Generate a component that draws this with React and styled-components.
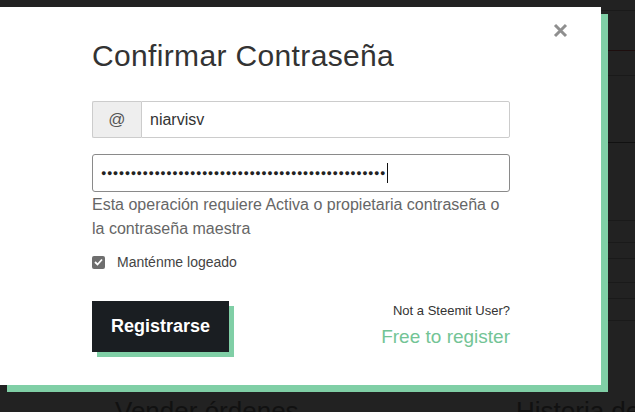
import React from "react";
import styled, { createGlobalStyle } from "styled-components";

const GlobalStyle = createGlobalStyle`
  html, body { margin: 0; padding: 0; }
  body {
    background: #222222;
    font-family: "Liberation Sans", Arial, sans-serif;
  }
`;

const Page = styled.div`
  position: relative;
  width: 635px;
  height: 412px;
  overflow: hidden;
  background: #222222;
  display: flex;
  flex-direction: column;
`;

const Backdrop = styled.div`
  display: flex;
  flex-direction: column;
  flex: 1;
`;

const BgRow = styled.div`
  height: ${(p) => p.h}px;
  border-bottom: 1px solid ${(p) => p.line || "#1a1a1a"};
  box-sizing: border-box;
`;

const BgHeadings = styled.div`
  display: grid;
  grid-template-columns: 401px 1fr;
  padding-left: 115px;
  margin-top: auto;
  height: 16px;
`;

const BgHeading = styled.h3`
  margin: 0;
  font-family: "Liberation Sans", Arial, sans-serif;
  font-weight: 400;
  font-size: 26px;
  line-height: 30px;
  color: #111111;
  white-space: nowrap;
`;

const Modal = styled.div`
  position: absolute;
  top: 7px;
  left: 0;
  width: 601px;
  height: 378px;
  background: #ffffff;
  box-shadow: 7px 7px 0 #80cfa6;
  box-sizing: border-box;
  padding: 31px 91px 0 92px;
`;

const Close = styled.button`
  position: absolute;
  top: 15px;
  right: 33px;
  border: 0;
  background: none;
  padding: 0;
  width: 16px;
  height: 16px;
  display: flex;
  align-items: center;
  justify-content: center;
  cursor: pointer;
`;

const Title = styled.h2`
  margin: 0 0 27px;
  font-size: 30px;
  font-weight: 400;
  letter-spacing: 0.35px;
  line-height: 36px;
  color: #333333;
`;

const InputGroup = styled.div`
  display: flex;
  height: 37px;
  margin-bottom: 16px;
`;

const Addon = styled.span`
  width: 48px;
  display: flex;
  align-items: center;
  justify-content: center;
  background: #eeeeee;
  border: 1px solid #cccccc;
  border-right: 0;
  border-radius: 2px 0 0 2px;
  font-size: 17px;
  color: #555555;
`;

const Field = styled.div`
  flex: 1;
  display: flex;
  align-items: center;
  height: ${(p) => p.h || 37}px;
  box-sizing: border-box;
  padding: 0 8px;
  border: 1px solid ${(p) => (p.focused ? "#8a8a8a" : "#cccccc")};
  border-radius: ${(p) => (p.focused ? "3px" : "0 2px 2px 0")};
  font-size: 16px;
  color: #333333;
  background: #ffffff;
`;

const Dots = styled.span`
  font-size: 9px;
  letter-spacing: 0.5px;
  color: #222222;
  line-height: 1;
`;

const Caret = styled.span`
  display: inline-block;
  width: 1px;
  height: 20px;
  background: #111111;
  margin-left: 1px;
`;

const Help = styled.p`
  margin: 1px 0 0;
  font-size: 16px;
  line-height: 24px;
  color: #666666;
`;

const CheckRow = styled.label`
  display: flex;
  align-items: center;
  gap: 12px;
  margin-top: 13px;
  font-size: 14px;
  color: #444444;
`;

const Box = styled.span`
  width: 13px;
  height: 13px;
  border-radius: 2px;
  background: #6e6e6e;
  display: flex;
  align-items: center;
  justify-content: center;
`;

const Footer = styled.div`
  display: flex;
  justify-content: space-between;
  align-items: flex-start;
  margin-top: 31px;
`;

const Submit = styled.button`
  width: 137px;
  height: 51px;
  border: 0;
  background: #1a1e22;
  color: #ffffff;
  font-family: "Liberation Sans", Arial, sans-serif;
  font-weight: 700;
  font-size: 18px;
  box-shadow: 5px 5px 0 #80cfa6;
  cursor: pointer;
`;

const SignUp = styled.div`
  display: flex;
  flex-direction: column;
  align-items: flex-end;
  padding-top: 2px;
`;

const Small = styled.span`
  font-size: 13px;
  color: #333333;
  line-height: 16px;
`;

const Link = styled.a`
  margin-top: 6px;
  font-size: 19px;
  line-height: 24px;
  color: #73c495;
  text-decoration: none;
`;

const rows = [
  { h: 11 },
  { h: 40, line: "#1e0e0e" },
  { h: 25 },
  { h: 67, line: "#111111" },
  { h: 78 },
  { h: 22 },
  { h: 16 },
  { h: 24 },
  { h: 16 },
  { h: 22 },
];

export default function App() {
  return (
    <>
      <GlobalStyle />
      <Page>
        <Backdrop>
          {rows.map((r, i) => (
            <BgRow key={i} h={r.h} line={r.line} />
          ))}
          <BgHeadings>
            <BgHeading>Vender órdenes</BgHeading>
            <BgHeading>Historia de</BgHeading>
          </BgHeadings>
        </Backdrop>

        <Modal>
          <Close aria-label="close">
            <svg width="15" height="15" viewBox="0 0 15 15">
              <path d="M2 2 L13 13 M13 2 L2 13" stroke="#8f8f8f" strokeWidth="3" strokeLinecap="butt" />
            </svg>
          </Close>
          <Title>Confirmar Contraseña</Title>
          <InputGroup>
            <Addon>@</Addon>
            <Field>niarvisv</Field>
          </InputGroup>
          <Field h={38} focused>
            <Dots>{"●".repeat(48)}</Dots>
            <Caret />
          </Field>
          <Help>Esta operación requiere Activa o propietaria contraseña o la contraseña maestra</Help>
          <CheckRow>
            <Box>
              <svg width="9" height="8" viewBox="0 0 9 8">
                <path d="M1 4 L3.5 6.5 L8 1.5" stroke="#ffffff" strokeWidth="1.8" fill="none" />
              </svg>
            </Box>
            Manténme logeado
          </CheckRow>
          <Footer>
            <Submit>Registrarse</Submit>
            <SignUp>
              <Small>Not a Steemit User?</Small>
              <Link href="#">Free to register</Link>
            </SignUp>
          </Footer>
        </Modal>
      </Page>
    </>
  );
}
